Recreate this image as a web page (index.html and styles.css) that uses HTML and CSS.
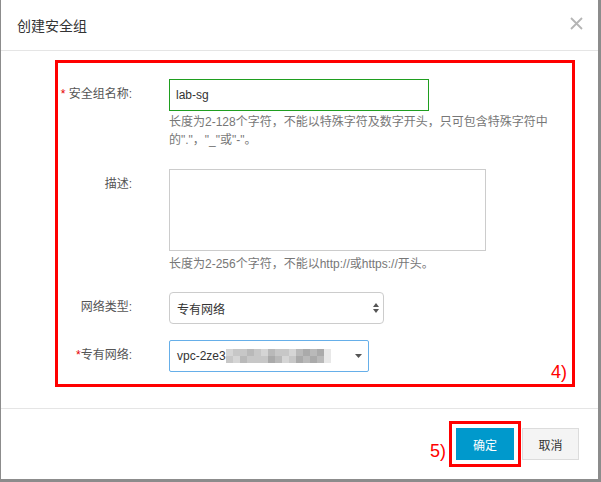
FILE: index.html
```html
<!DOCTYPE html>
<html lang="zh-CN">
<head>
<meta charset="utf-8">
<title>创建安全组</title>
<link rel="stylesheet" href="styles.css">
</head>
<body>
<div class="dialog">
  <div class="dlg-header">
    <span class="dlg-title">创建安全组</span>
    <svg class="dlg-close" viewBox="0 0 13 13" width="13" height="13"><path d="M1 1L12 12M12 1L1 12" stroke="#b5b5b5" stroke-width="1.8" fill="none"/></svg>
  </div>
  <div class="dlg-body">
    <div class="annot-box">
      <div class="form-row">
        <label class="form-label"><span class="req">*</span> 安全组名称:</label>
        <div class="form-field">
          <input class="text-input" type="text" value="lab-sg">
          <p class="help">长度为2-128个字符，不能以特殊字符及数字开头，只可包含特殊字符中<br>的"."，"_"或"-"。</p>
        </div>
      </div>
      <div class="form-row row-desc">
        <label class="form-label">描述:</label>
        <div class="form-field">
          <textarea class="textarea"></textarea>
          <p class="help help-desc">长度为2-256个字符，不能以http://或https://开头。</p>
        </div>
      </div>
      <div class="form-row row-type">
        <label class="form-label">网络类型:</label>
        <div class="form-field">
          <div class="select select-type">
            <span class="select-value">专有网络</span>
            <svg class="spinner" viewBox="0 0 6 10" width="6" height="10"><path d="M0 4L3 0L6 4Z M0 6L3 10L6 6Z" fill="#555"/></svg>
          </div>
        </div>
      </div>
      <div class="form-row row-vpc">
        <label class="form-label"><span class="req">*</span>专有网络:</label>
        <div class="form-field">
          <div class="select select-vpc">
            <span class="select-value vpc-value">vpc-2ze3<span class="blur">
              <i class="s2"></i><i class="s3"></i><i class="s3"></i><i class="s4"></i><i class="s3"></i><i class="s2"></i><i class="s4"></i><i class="s3"></i><i class="s3"></i><i class="s2"></i><i class="s4"></i><i class="s5"></i><i class="s4"></i><i class="s5"></i><i class="s1"></i>
              <i class="s3"></i><i class="s2"></i><i class="s4"></i><i class="s3"></i><i class="s3"></i><i class="s3"></i><i class="s5"></i><i class="s4"></i><i class="s2"></i><i class="s3"></i><i class="s5"></i><i class="s4"></i><i class="s5"></i><i class="s4"></i><i class="s1"></i>
            </span></span>
            <svg class="caret" viewBox="0 0 7 4" width="7" height="4"><path d="M0 0H7L3.5 4Z" fill="#555"/></svg>
          </div>
        </div>
      </div>
      <span class="annot-num box-num">4)</span>
    </div>
  </div>
  <div class="dlg-footer">
    <span class="annot-num footer-num">5)</span>
    <button class="btn btn-primary" type="button">确定</button>
    <button class="btn btn-cancel" type="button">取消</button>
  </div>
</div>
</body>
</html>
```
FILE: styles.css
```css
body {
  margin: 0;
  background: #8c8c8c;
  font-family: "Liberation Sans", "Noto Sans CJK SC", sans-serif;
}

.dialog {
  width: 597px;
  height: 479px;
  margin-left: 1px;
  background: #fff;
  display: flex;
  flex-direction: column;
}

.dlg-header {
  height: 50px;
  flex-shrink: 0;
  border-bottom: 1px solid #e5e5e5;
  display: flex;
  align-items: center;
  justify-content: space-between;
  padding: 0 15px 0 16px;
}

.dlg-title {
  font-size: 14px;
  color: #333;
}

.dlg-close {
  display: block;
  margin-bottom: 3px;
}

.dlg-body {
  height: 357px;
  flex-shrink: 0;
  box-sizing: border-box;
  padding-top: 9px;
}

.annot-box {
  position: relative;
  margin-left: 54px;
  width: 520px;
  box-sizing: border-box;
  border: 3px solid #ff0000;
  padding: 16px 0 12px;
}

.form-row {
  display: flex;
}

.row-desc { margin-top: 20px; }
.row-type { margin-top: 19px; }
.row-vpc { margin-top: 16px; }

.form-label {
  width: 111px;
  flex-shrink: 0;
  box-sizing: border-box;
  padding: 6px 37px 0 0;
  text-align: right;
  font-size: 12px;
  line-height: 18px;
  color: #555;
  white-space: nowrap;
}

.req {
  color: #e60000;
}

.form-field {
  flex: 1;
}

.text-input {
  display: block;
  width: 260px;
  height: 32px;
  box-sizing: border-box;
  margin: 0;
  border: 1px solid #1f9e1f;
  padding: 0 6px;
  font-family: "Liberation Sans", "Noto Sans CJK SC", sans-serif;
  font-size: 12px;
  color: #333;
  outline: none;
}

.help {
  margin: 2px 0 0;
  font-size: 12px;
  line-height: 18px;
  color: #777;
  white-space: nowrap;
}

.help-desc {
  margin-top: 4px;
}

.textarea {
  display: block;
  width: 317px;
  height: 82px;
  box-sizing: border-box;
  margin: 0;
  padding: 0;
  border: 1px solid #ccc;
  resize: none;
  outline: none;
}

.select {
  height: 32px;
  box-sizing: border-box;
  border: 1px solid #ccc;
  display: flex;
  align-items: center;
  padding: 0 4px 0 7px;
  font-size: 12px;
  color: #333;
}

.select-type {
  width: 215px;
  border-radius: 4px;
}

.select-vpc {
  width: 200px;
  border-color: #66afe9;
  border-radius: 2px;
  padding-right: 6px;
}

.select-value {
  flex: 1;
}

.vpc-value {
  display: flex;
  align-items: center;
}

.spinner,
.caret {
  display: block;
}

.blur {
  display: grid;
  grid-template-columns: repeat(15, 7px);
  grid-auto-rows: 7px;
}

.blur i { display: block; }
.blur .s1 { background: #e8e8e8; }
.blur .s2 { background: #d5d5d5; }
.blur .s3 { background: #c7c7c7; }
.blur .s4 { background: #b9b9b9; }
.blur .s5 { background: #aaaaaa; }

.annot-num {
  color: #ff0000;
  font-size: 18px;
  line-height: 20px;
}

.box-num {
  position: absolute;
  right: 5px;
  bottom: 3px;
  line-height: 18px;
}

.dlg-footer {
  flex: 1;
  border-top: 1px solid #e5e5e5;
  display: flex;
  justify-content: flex-end;
  align-items: flex-start;
  padding: 19px 19px 0 0;
}

.footer-num {
  margin: 13px 10px 0 0;
}

.btn {
  height: 32px;
  box-sizing: border-box;
  margin: 0;
  padding: 0;
  border: 1px solid #dcdcdc;
  background: #f4f4f4;
  font-family: "Liberation Sans", "Noto Sans CJK SC", sans-serif;
  font-size: 12px;
  color: #333;
}

.btn-primary {
  width: 58px;
  background: #0099cc;
  border-color: #0099cc;
  color: #fff;
  outline: 3px solid #ff0000;
  outline-offset: 4px;
}

.btn-cancel {
  width: 57px;
  margin-left: 8px;
}
```
